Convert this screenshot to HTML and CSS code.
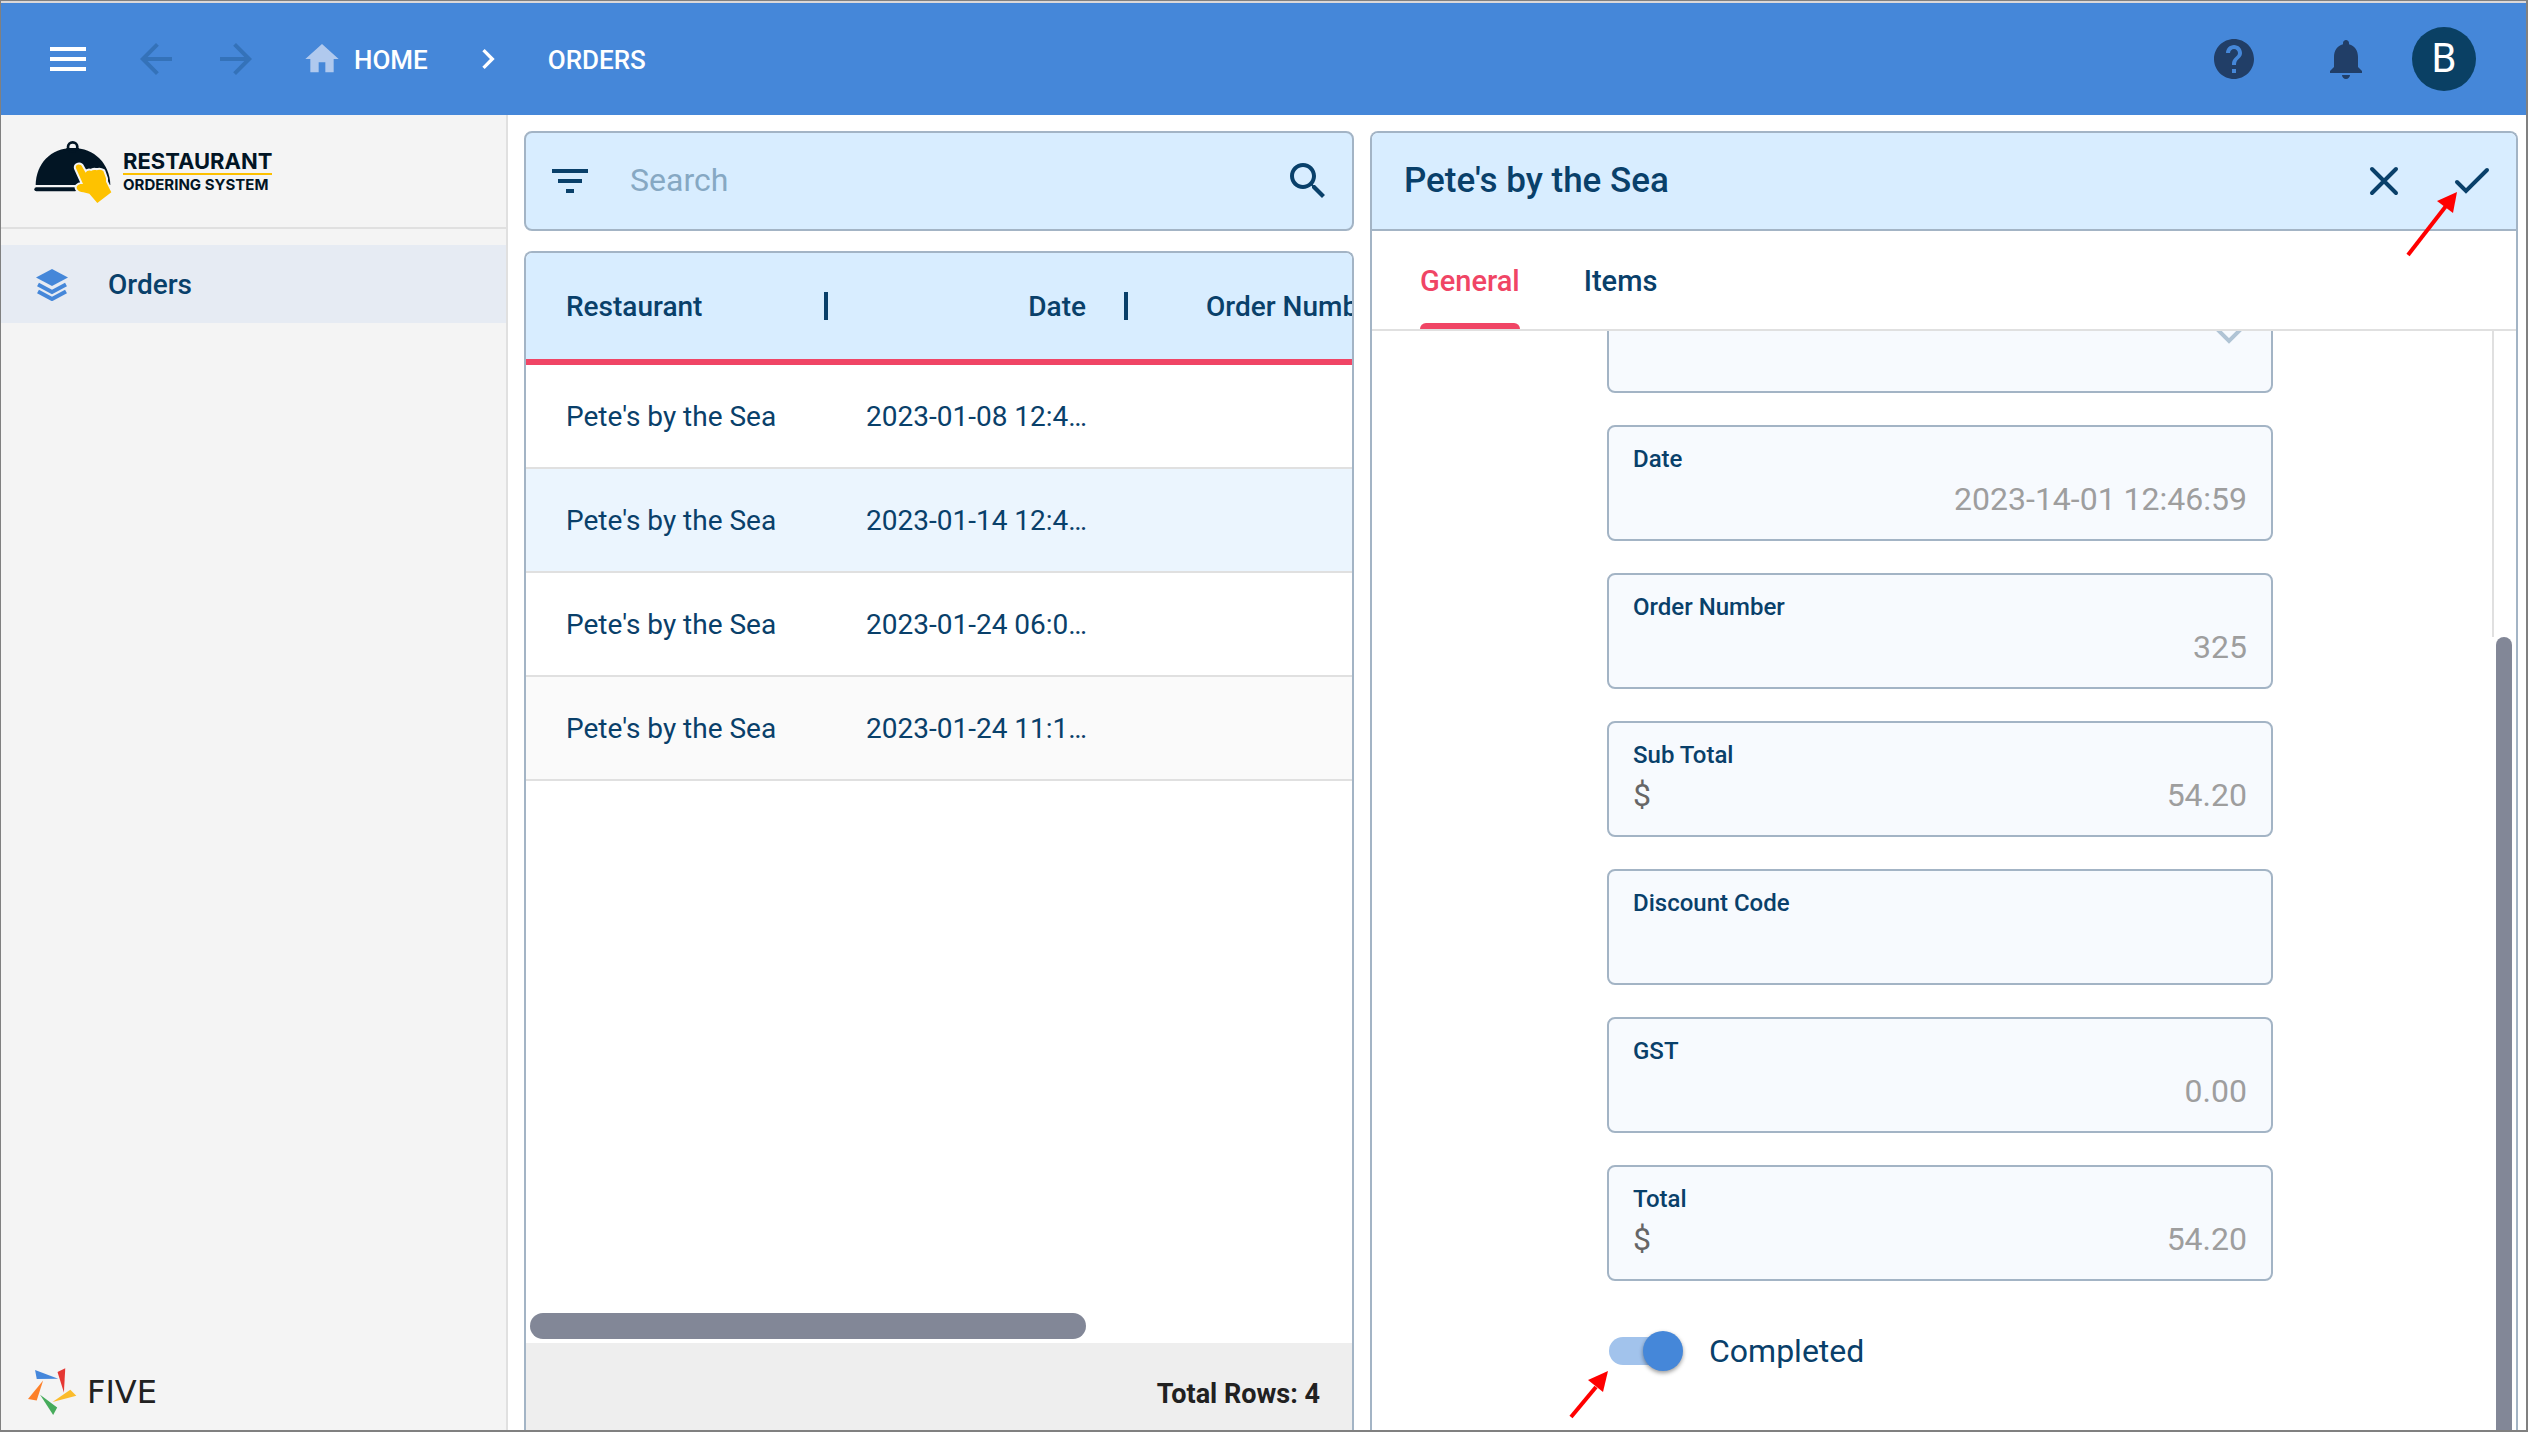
FILE: index.html
```html
<!DOCTYPE html>
<html lang="en">
<head>
<meta charset="utf-8">
<title>Orders</title>
<link rel="stylesheet" href="styles.css">
</head>
<body>
<header class="topbar">
  <button class="icon-btn" aria-label="Menu"><svg class="icon" viewBox="0 0 24 24"><path d="M3 18h18v-2H3v2zm0-5h18v-2H3v2zm0-7v2h18V6H3z"/></svg></button>
  <div class="history">
    <button class="icon-btn" aria-label="Back"><svg class="icon" viewBox="0 0 24 24"><path d="M20 11H7.83l5.59-5.59L12 4l-8 8 8 8 1.41-1.41L7.83 13H20v-2z"/></svg></button>
    <button class="icon-btn" aria-label="Forward"><svg class="icon" viewBox="0 0 24 24"><path d="M12 4l-1.41 1.41L16.17 11H4v2h12.17l-5.58 5.59L12 20l8-8z"/></svg></button>
  </div>
  <nav class="crumbs">
    <a class="crumb" href="#home"><svg class="icon-sm home" viewBox="0 0 24 24"><path d="M10 20v-6h4v6h5v-8h3L12 3 2 12h3v8z"/></svg><span class="crumb-text">HOME</span></a>
    <svg class="icon-sm" viewBox="0 0 24 24"><path d="M10 6L8.59 7.41 13.17 12l-4.58 4.59L10 18l6-6z"/></svg>
    <a class="crumb" href="#orders"><span class="crumb-text">ORDERS</span></a>
  </nav>
  <div class="account">
    <button class="icon-btn" aria-label="Help"><svg class="icon" viewBox="0 0 24 24"><path d="M12 2C6.48 2 2 6.48 2 12s4.48 10 10 10 10-4.48 10-10S17.52 2 12 2zm1 17h-2v-2h2v2zm2.07-7.75l-.9.92C13.45 12.9 13 13.5 13 15h-2v-.5c0-1.1.45-2.1 1.17-2.83l1.24-1.26c.37-.36.59-.86.59-1.41 0-1.1-.9-2-2-2s-2 .9-2 2H8c0-2.21 1.79-4 4-4s4 1.79 4 4c0 .88-.36 1.68-.93 2.25z"/></svg></button>
    <button class="icon-btn" aria-label="Notifications"><svg class="icon" viewBox="0 0 24 24"><path d="M12 22c1.1 0 2-.9 2-2h-4c0 1.1.89 2 2 2zm6-6v-5c0-3.07-1.64-5.64-4.5-6.32V4c0-.83-.67-1.5-1.5-1.5s-1.5.67-1.5 1.5v.68C7.63 5.36 6 7.92 6 11v5l-2 2v1h16v-1l-2-2z"/></svg></button>
    <button class="avatar">B</button>
  </div>
</header>

<div class="workspace">
  <aside class="sidebar">
    <div class="brand">
      <svg class="brand-mark" viewBox="36 30 246 190">
        <g fill="#021524">
          <path d="M47 164C48 100 92 53 158 53s111 47 113 111z"/>
          <circle cx="158" cy="50" r="14" fill="none" stroke="#021524" stroke-width="8"/>
          <rect x="43" y="171" width="128" height="12" rx="6"/>
        </g>
        <path d="M140 53h36l6 8h-48z" fill="#021524"/>
        <path d="M168 114c-4-12 14-16 19-4l10 17c4-6 10-8 16-5 5-4 12-4 17-2 6-3 14-2 20 2l8 22v10l16 32-42 32-24-28-18-4c-16-2-24-12-18-20 4-5 10-6 17-5z" fill="#fec200" stroke="#f4f4f4" stroke-width="12" stroke-linejoin="round" paint-order="stroke"/>
      </svg>
      <div class="brand-text"><span class="brand-name">RESTAURANT</span><span class="brand-sub">ORDERING SYSTEM</span></div>
    </div>
    <nav class="side-nav">
      <a class="side-link" href="#orders">
        <svg class="layers" viewBox="0 0 32 32"><path d="M16 0l16 8.500-16 8.500L0 8.500z"/><path d="M2 15.500l14 7.500 14-7.500M2 22.500l14 7.500 14-7.500" fill="none" stroke="currentColor" stroke-width="4"/></svg>
        Orders
      </a>
    </nav>
    <div class="vendor">
      <svg class="vendor-mark" viewBox="24 38 146 140"><path fill="#4587db" d="M45 44l69 26-64 1z"/><path fill="#e53733" d="M112 50l23-11-4 72z"/><path fill="#fbbc2c" d="M150 103l18 18-71 18z"/><path fill="#46ab5b" d="M60 118l51 38-12 22z"/><path fill="#fd8029" d="M69 75l-19 60-26-5z"/></svg>
      <span class="vendor-name">FIVE</span>
    </div>
  </aside>

  <main class="content">
    <section class="list">
      <form class="search">
        <button type="button" class="icon-btn" aria-label="Filter"><svg class="icon" viewBox="0 0 24 24"><path d="M10 18h4v-2h-4v2zM3 6v2h18V6H3zm3 7h12v-2H6v2z"/></svg></button>
        <input class="search-input" type="text" placeholder="Search" aria-label="Search">
        <button type="button" class="icon-btn" aria-label="Run search"><svg class="icon" viewBox="0 0 24 24"><path d="M15.500 14h-.79l-.28-.27C15.410 12.590 16 11.110 16 9.500 16 5.910 13.090 3 9.500 3S3 5.910 3 9.500 5.910 16 9.500 16c1.610 0 3.090-.59 4.230-1.570l.27.28v.79l5 4.990L20.490 19l-4.990-5zm-6 0C7.010 14 5 11.990 5 9.500S7.010 5 9.500 5 14 7.010 14 9.500 11.990 14 9.500 14z"/></svg></button>
      </form>
      <div class="grid-panel">
        <div class="grid-scroll">
          <table class="grid">
            <colgroup><col class="col"><col class="col"><col class="col"></colgroup>
            <thead><tr><th>Restaurant</th><th class="num">Date</th><th class="last">Order Number</th></tr></thead>
            <tbody>
              <tr><td>Pete's by the Sea</td><td>2023-01-08 12:4…</td><td></td></tr>
              <tr class="selected"><td>Pete's by the Sea</td><td>2023-01-14 12:4…</td><td></td></tr>
              <tr><td>Pete's by the Sea</td><td>2023-01-24 06:0…</td><td></td></tr>
              <tr class="striped"><td>Pete's by the Sea</td><td>2023-01-24 11:1…</td><td></td></tr>
            </tbody>
          </table>
        </div>
        <div class="h-scroll"><div class="h-thumb"></div></div>
        <footer class="grid-foot">Total Rows: 4</footer>
      </div>
    </section>

    <section class="detail">
      <div class="detail-head">
        <h1 class="detail-title">Pete's by the Sea</h1>
        <button class="icon-btn" aria-label="Close"><svg class="icon line" viewBox="0 0 48 48"><path d="M12 12l24 24M36 12L12 36"/></svg></button>
        <button class="icon-btn save" aria-label="Save"><svg class="icon line" viewBox="0 0 48 48"><path d="M9 25l9 9 21-21"/></svg>
          <svg class="pointer pointer-save" viewBox="0 0 54 66"><path d="M3 64L41 15" stroke="#f00" stroke-width="4"/><path d="M52 1L32 10l16 12z" fill="#f00"/></svg>
        </button>
      </div>
      <div class="tabs" role="tablist">
        <button class="tab active" role="tab" aria-selected="true">General</button>
        <button class="tab" role="tab" aria-selected="false">Items</button>
      </div>
      <div class="detail-body">
        <form class="fields">
          <div class="field field-select">
            <select class="select" aria-label="Restaurant"><option></option></select>
            <svg class="icon chevron" viewBox="0 0 48 48"><path d="M12 18l12 12 12-12" fill="none" stroke="currentColor" stroke-width="4"/></svg>
          </div>
          <div class="field"><label for="date">Date</label><div class="value"><input id="date" type="text" value="2023-14-01 12:46:59"></div></div>
          <div class="field"><label for="number">Order Number</label><div class="value"><input id="number" type="text" value="325"></div></div>
          <div class="field"><label for="sub">Sub Total</label><div class="value"><span class="currency">$</span><input id="sub" type="text" value="54.20"></div></div>
          <div class="field"><label for="code">Discount Code</label><div class="value"><input id="code" type="text"></div></div>
          <div class="field"><label for="gst">GST</label><div class="value"><input id="gst" type="text" value="0.00"></div></div>
          <div class="field"><label for="total">Total</label><div class="value"><span class="currency">$</span><input id="total" type="text" value="54.20"></div></div>
          <div class="toggle-row">
            <input class="toggle" id="completed" type="checkbox" role="switch" checked>
            <label class="toggle-label" for="completed">Completed</label>
            <svg class="pointer pointer-toggle" viewBox="0 0 42 50"><path d="M3 47L28 17" stroke="#f00" stroke-width="4"/><path d="M40 1L20 10l15 12z" fill="#f00"/></svg>
          </div>
        </form>
        <div class="v-scroll"><div class="v-track"></div><div class="v-thumb"></div></div>
      </div>
    </section>
  </main>
</div>
</body>
</html>
```

FILE: styles.css
```css
* { box-sizing: border-box; }

:root {
  --navy: #09406a;
  --blue: #4587d9;
  --sky: #d8edff;
  --line: #a3b4c5;
  --rule: #e0e0e0;
  --red: #f04565;
}

body {
  margin: 0;
  height: 100vh;
  display: flex;
  flex-direction: column;
  overflow: hidden;
  border: solid #808080;
  border-width: 1px 2px 2px 1px;
  font-family: Roboto, "Liberation Sans", sans-serif;
  font-size: 28px;
  line-height: 32px;
  color: var(--navy);
  background: #fff;
}

button, input, select {
  font: inherit;
  color: inherit;
  border: 0;
  padding: 0;
  margin: 0;
  background: none;
  outline: 0;
}

a { color: inherit; text-decoration: none; }
svg { display: block; fill: currentColor; flex: none; }

.icon { width: 48px; height: 48px; }
.icon-sm { width: 40px; height: 40px; }
.icon-btn { width: 48px; height: 48px; flex: none; }
.line { fill: none; stroke: currentColor; stroke-width: 4; stroke-linecap: round; }

/* Top bar */
.topbar {
  flex: none;
  height: 114px;
  display: flex;
  align-items: center;
  padding: 0 50px 0 43px;
  border-top: 2px solid #dcd8d8;
  background: var(--blue);
  color: #fff;
}
.history { display: flex; gap: 32px; margin-left: 40px; color: #3472b9; }
.crumbs { display: flex; align-items: center; margin-left: 42px; font-size: 26px; font-weight: 500; }
.crumb { display: flex; align-items: center; gap: 12px; }
.crumb-text { padding-top: 2px; }
.home { color: #b0c9ee; }
.crumbs > .icon-sm { margin: 0 40px; }
.account { display: flex; align-items: center; margin-left: auto; color: #213e67; }
.account .icon-btn + .icon-btn { margin-left: 64px; }
.avatar {
  width: 64px;
  height: 64px;
  margin-left: 42px;
  border-radius: 50%;
  background: #0a4064;
  color: #fff;
  font-size: 40px;
}

.workspace { flex: 1; min-height: 0; display: flex; }

/* Sidebar */
.sidebar {
  flex: none;
  width: 507px;
  display: flex;
  flex-direction: column;
  border-right: 2px solid var(--rule);
  background: #f4f4f4;
}
.brand {
  height: 114px;
  display: flex;
  gap: 9px;
  padding: 25px 31px;
  border-bottom: 2px solid var(--rule);
}
.brand-mark { width: 82px; height: 64px; }
.brand-text {
  display: flex;
  flex-direction: column;
  padding-top: 9px;
  font-family: Inter, sans-serif;
  font-weight: 700;
  color: #021524;
}
.brand-name { font-size: 22px; line-height: 24px; border-bottom: 2px solid #fdc000; }
.brand-sub { font-size: 15px; line-height: 20px; }
.side-nav { padding-top: 16px; }
.side-link {
  height: 78px;
  display: flex;
  align-items: center;
  gap: 40px;
  padding: 2px 35px 0;
  background: #e6ebf3;
  font-weight: 500;
}
.layers { width: 32px; height: 32px; color: var(--blue); }
.vendor { display: flex; align-items: center; gap: 10px; margin-top: auto; padding: 0 27px 15px; }
.vendor-mark { width: 49px; height: 47px; }
.vendor-name { font-family: "DejaVu Sans", sans-serif; font-size: 32px; color: #212121; }

/* Content columns */
.content {
  flex: 1;
  min-width: 0;
  display: grid;
  grid-template-columns: minmax(0, 830px) minmax(0, 1fr);
  gap: 16px;
  padding: 16px 8px 0 16px;
}
.list { display: flex; flex-direction: column; gap: 20px; min-height: 0; }
.search {
  flex: none;
  height: 100px;
  display: flex;
  align-items: center;
  padding: 0 20px;
  border: 2px solid var(--line);
  border-radius: 8px;
  background: var(--sky);
}
.search-input { flex: 1; min-width: 0; margin-left: 36px; padding-bottom: 2px; font-size: 32px; }
.search-input::placeholder { color: #86a8c3; opacity: 1; }

.grid-panel {
  flex: 1;
  min-height: 0;
  display: flex;
  flex-direction: column;
  overflow: hidden;
  border: 2px solid var(--line);
  border-bottom: 0;
  border-radius: 8px 8px 0 0;
}
.grid-scroll { flex: 1; min-height: 0; overflow: hidden; }
.grid { width: 900px; table-layout: fixed; border-collapse: separate; border-spacing: 0; white-space: nowrap; }
.col { width: 300px; }
.grid th {
  position: relative;
  height: 112px;
  padding: 2px 40px 0;
  border-bottom: 6px solid var(--red);
  background: var(--sky);
  font-weight: 500;
  text-align: left;
}
.grid th:not(.last)::after {
  content: "";
  position: absolute;
  z-index: 1;
  right: -2px;
  top: 39px;
  width: 4px;
  height: 28px;
  background: var(--navy);
}
.grid .num { text-align: right; }
.grid .last { padding: 2px 0 0 80px; }
.grid td { height: 104px; padding: 2px 32px 0 40px; border-bottom: 2px solid var(--rule); }
.selected { background: #ebf5fe; }
.striped { background: #fafafa; }
.h-scroll { flex: none; padding: 0 4px 4px; }
.h-thumb { width: 68%; height: 26px; border-radius: 13px; background: #828797; }
.grid-foot {
  flex: none;
  height: 87px;
  padding: 35px 32px 0;
  background: #eee;
  color: #212121;
  font-size: 27px;
  font-weight: 700;
  text-align: right;
}

/* Record detail */
.detail {
  min-height: 0;
  display: flex;
  flex-direction: column;
  border: 2px solid var(--line);
  border-bottom: 0;
  border-radius: 8px 8px 0 0;
}
.detail-head {
  flex: none;
  height: 98px;
  display: flex;
  align-items: center;
  gap: 40px;
  padding: 0 20px 0 32px;
  border-bottom: 2px solid var(--line);
  border-radius: 6px 6px 0 0;
  background: var(--sky);
}
.detail-title { flex: 1; margin: 0; font-size: 35px; line-height: 40px; font-weight: 500; }
.save { position: relative; }
.pointer { position: absolute; }
.pointer-save { width: 54px; height: 66px; left: -43px; top: 34px; }
.tabs {
  flex: none;
  height: 100px;
  display: flex;
  gap: 64px;
  padding: 0 48px;
  border-bottom: 2px solid var(--rule);
}
.tab { display: flex; align-items: center; position: relative; padding-top: 2px; font-size: 29px; font-weight: 500; }
.active { color: var(--red); }
.active::after {
  content: "";
  position: absolute;
  inset: auto 0 0;
  height: 6px;
  border-radius: 6px 6px 0 0;
  background: var(--red);
}
.detail-body { flex: 1; min-height: 0; display: flex; overflow: hidden; }
.fields {
  flex: 1;
  display: flex;
  flex-direction: column;
  align-items: center;
  justify-content: flex-end;
  gap: 32px;
  padding: 0 0 41px 16px;
}
.field, .toggle-row { flex: none; width: 100%; max-width: 666px; }
.field {
  height: 116px;
  display: flex;
  flex-direction: column;
  gap: 8px;
  padding: 18px 24px;
  border: 2px solid var(--line);
  border-radius: 8px;
  background: #f7fafe;
}
.field label { font-size: 24px; line-height: 28px; font-weight: 500; }
.value { display: flex; font-size: 32px; line-height: 36px; }
.value input { flex: 1; min-width: 0; height: 36px; text-align: right; color: #9e9e9e; }
.currency { color: #666; }
.field-select { flex-direction: row; gap: 0; padding: 0 18px; align-items: center; }
.select { flex: 1; height: 80px; appearance: none; }
.chevron { color: #b0c4d5; }

.toggle-row { position: relative; height: 76px; display: flex; align-items: center; gap: 26px; padding-left: 2px; }
.toggle { appearance: none; position: relative; width: 74px; height: 40px; }
.toggle::before {
  content: "";
  position: absolute;
  inset: 6px 6px 6px 0;
  border-radius: 14px;
  background: #a2c3ec;
}
.toggle::after {
  content: "";
  position: absolute;
  right: 0;
  top: 0;
  width: 40px;
  height: 40px;
  border-radius: 50%;
  background: var(--blue);
  box-shadow: 0 2px 4px #0006;
}
.toggle-label { font-size: 32px; line-height: 38px; }
.pointer-toggle { width: 42px; height: 50px; left: -39px; top: 57px; }

.v-scroll { flex: none; width: 24px; display: flex; flex-direction: column; padding-right: 4px; }
.v-track { height: 306px; border-left: 2px solid var(--rule); }
.v-thumb { flex: 1; width: 16px; margin-left: 4px; border-radius: 8px 8px 0 0; background: #828797; }
```
